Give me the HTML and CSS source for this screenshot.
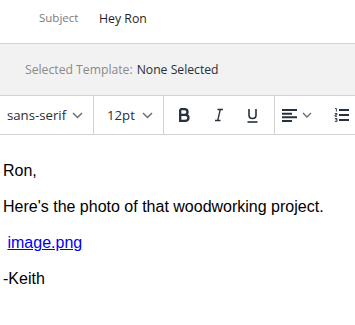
FILE: index.html
```html
<!DOCTYPE html>
<html>
<head>
    <title>Compose</title>
    <link rel="stylesheet" href="styles.css">
</head>
<body>
    <div class="subject-row">
        <span class="subject-label">Subject</span>
        <span class="subject-value">Hey Ron</span>
    </div>
    <div class="template-bar">
        <span class="template-label">Selected Template:</span>
        <span class="template-value">None Selected</span>
    </div>
    <div class="toolbar">
        <div class="tool-group font-family">
            <span>sans-serif</span>
            <svg class="chevron" width="11" height="7" viewBox="0 0 11 7"><path d="M1 1l4.5 4.5L10 1" fill="none" stroke="#6b6e75" stroke-width="1.5"/></svg>
        </div>
        <div class="tool-group font-size">
            <span>12pt</span>
            <svg class="chevron" width="11" height="7" viewBox="0 0 11 7"><path d="M1 1l4.5 4.5L10 1" fill="none" stroke="#6b6e75" stroke-width="1.5"/></svg>
        </div>
        <div class="tool-group format">
            <svg width="13" height="14" viewBox="0 0 13 14"><path d="M2.2 1.2v11.6h4.9c2.1 0 3.4-1.1 3.4-3s-1.3-3-3.4-3H2.2 M2.2 6.8h4.4c1.8 0 2.9-.9 2.9-2.8s-1.1-2.8-2.9-2.8H2.2" fill="none" stroke="#27303d" stroke-width="2.3"/></svg>
            <svg width="10" height="14" viewBox="0 0 10 14"><path d="M3.5 1.5h5.5M1 12.5h5.5M6.3 1.5L3.7 12.5" fill="none" stroke="#27303d" stroke-width="1.3"/></svg>
            <svg width="11" height="15" viewBox="0 0 11 15"><path d="M2 1v6.3c0 2 1.3 3.2 3.5 3.2S9 9.3 9 7.3V1" fill="none" stroke="#27303d" stroke-width="1.6"/><path d="M0.5 14h10" stroke="#27303d" stroke-width="1.6"/></svg>
        </div>
        <div class="tool-group align">
            <svg width="15" height="13" viewBox="0 0 15 13"><path d="M0 1h15M0 4.7h10M0 8.3h15M0 12h10" stroke="#27303d" stroke-width="1.9"/></svg>
            <svg class="chevron" width="10" height="7" viewBox="0 0 10 7"><path d="M1 1l4 4 4-4" fill="none" stroke="#6b6e75" stroke-width="1.4"/></svg>
            <svg class="list" width="15" height="14" viewBox="0 0 15 14"><path d="M5 2h10M5 7h10M5 12h10" stroke="#27303d" stroke-width="1.9"/><path d="M1 .5h1.4v3M.8 5.5h2.2v1.4H1v1.5h2M.8 10.5h2.2v1.3h-1.6M3 11.8v1.6H.8" fill="none" stroke="#27303d" stroke-width=".9"/></svg>
        </div>
    </div>
    <div class="message-body">
        <p>Ron,</p>
        <p>Here's the photo of that woodworking project.</p>
        <p>&nbsp;<a href="#">image.png</a></p>
        <p>-Keith</p>
    </div>
</body>
</html>
```

FILE: styles.css
```css
body {
    margin: 0;
    font-family: 'Open Sans', sans-serif;
    background-color: #ffffff;
    color: #2c2c35;
}

.subject-row {
    display: flex;
    align-items: center;
    height: 43px;
    border-bottom: 1px solid #d3d3d3;
    padding-left: 39px;
}

.subject-label {
    font-size: 11.5px;
    color: #7a7a7a;
    width: 60px;
    margin-top: -8px;
}

.subject-value {
    font-size: 12.3px;
    color: #1f1f2a;
    margin-top: -6px;
}

.template-bar {
    display: flex;
    align-items: center;
    height: 51px;
    padding-left: 25px;
    background-color: #f2f2f2;
    border-bottom: 1px solid #d3d3d3;
    font-size: 12.2px;
}

.template-label {
    color: #8a8a8a;
    margin-right: 4px;
}

.template-value {
    color: #2c2c35;
}

.toolbar {
    display: flex;
    height: 38px;
    border-bottom: 1px solid #d3d3d3;
}

.tool-group {
    display: flex;
    align-items: center;
    border-right: 1px solid #d3d3d3;
    font-size: 13.2px;
    color: #2c2c35;
}

.font-family {
    width: 86px;
    padding-left: 7px;
}

.font-family .chevron {
    margin-left: 6px;
}

.font-size {
    width: 56px;
    padding-left: 13px;
}

.font-size .chevron {
    margin-left: 7px;
}

.format {
    width: 96px;
    padding-left: 14px;
    gap: 23px;
}

.align {
    border-right: none;
    padding-left: 7px;
}

.align .chevron {
    margin-left: 5px;
}

.align .list {
    margin-left: 22px;
}

.message-body {
    padding: 10px 3px;
    font-family: 'Liberation Sans', Arial, sans-serif;
    font-size: 16px;
    color: #000000;
}

.message-body p {
    margin: 16px 0;
    line-height: 20px;
}

.message-body a {
    color: #0000ee;
}
```
